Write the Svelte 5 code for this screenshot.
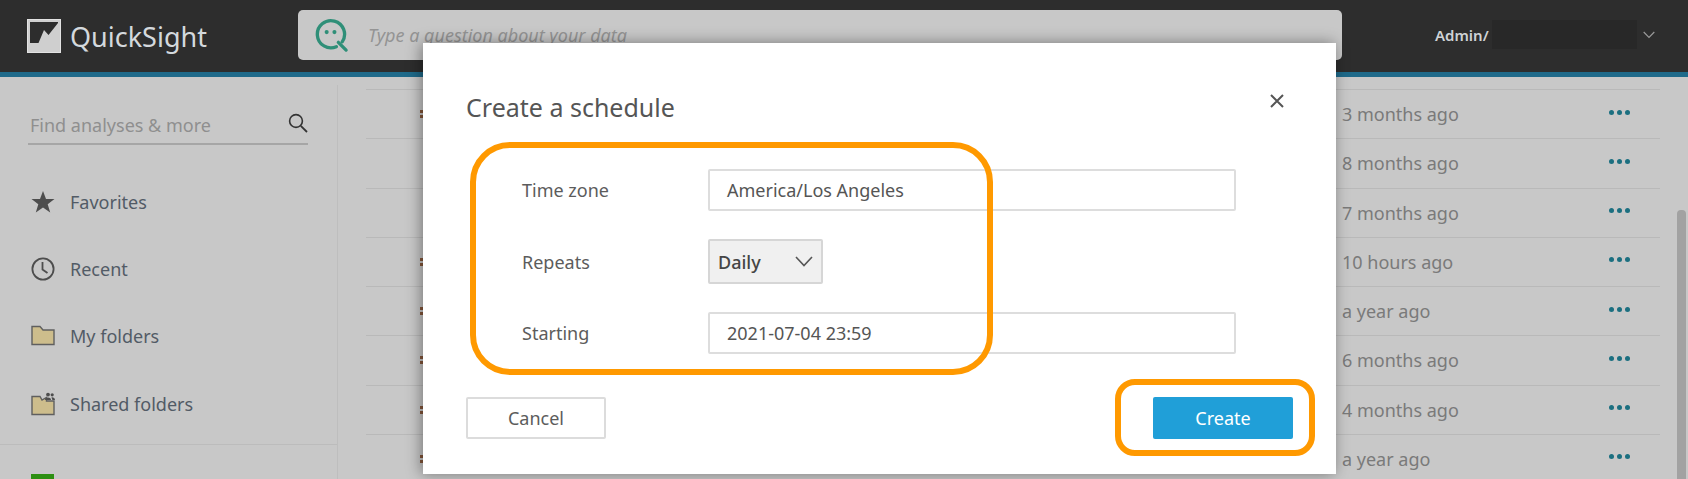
<script>
  const navItems = [
    { label: "Favorites", icon: "star" },
    { label: "Recent", icon: "clock" },
    { label: "My folders", icon: "folder" },
    { label: "Shared folders", icon: "shared" },
  ];

  const rows = [
    { age: "3 months ago", mark: true },
    { age: "8 months ago", mark: false },
    { age: "7 months ago", mark: false },
    { age: "10 hours ago", mark: true },
    { age: "a year ago", mark: true },
    { age: "6 months ago", mark: true },
    { age: "4 months ago", mark: true },
    { age: "a year ago", mark: true },
  ];
</script>

<div class="page">
  <header class="topbar">
    <div class="brand">
      <svg class="logo" viewBox="0 0 34 34" aria-hidden="true">
        <rect x="0.5" y="0.5" width="33" height="33" fill="#cfcfcf" stroke="#e2e2e2" />
        <path d="M3 3H31V4L21.5 16L17 11L11.5 24L3 24Z" fill="#2d2d2d" />
      </svg>
      <span class="brand-name">QuickSight</span>
    </div>
    <div class="ask">
      <svg class="ask-icon" viewBox="0 0 36 36" fill="none" aria-hidden="true">
        <path d="M22 29.5A14 14 0 1 1 28 24.5" stroke="#2f8f78" stroke-width="3.4" stroke-linecap="round" />
        <path d="M24 25L32 33" stroke="#2f8f78" stroke-width="3.4" stroke-linecap="round" />
        <circle cx="12" cy="14.5" r="2.1" fill="#2f8f78" />
        <circle cx="20" cy="14.5" r="2.1" fill="#2f8f78" />
      </svg>
      <span class="ask-text">Type a question about your data</span>
    </div>
    <div class="account">
      <span class="account-name">Admin/</span>
      <span class="redacted"></span>
      <svg class="account-caret" viewBox="0 0 12 8" fill="none" aria-hidden="true">
        <path d="M0.7 1L6 6.5L11.3 1" stroke="#9a9a9a" stroke-width="1.2" />
      </svg>
    </div>
  </header>

  <div class="content">
    <aside class="sidebar">
      <div class="find">
        <span class="find-text">Find analyses &amp; more</span>
        <svg class="find-icon" viewBox="0 0 20 20" fill="none" aria-hidden="true">
          <circle cx="8" cy="8" r="6.4" stroke="#333" stroke-width="1.6" />
          <path d="M12.8 12.8L19 19" stroke="#333" stroke-width="1.8" />
        </svg>
      </div>
      <nav class="nav">
        {#each navItems as item}
          <div class="nav-item">
            <span class="nav-icon">
              {#if item.icon === "star"}
                <svg viewBox="0 0 24 24" width="24" height="24" aria-hidden="true">
                  <path d="M12 1L15 9H23.5L16.7 14.2L19.2 22.6L12 17.6L4.8 22.6L7.3 14.2L0.5 9H9Z" fill="#4d4d4d" />
                </svg>
              {:else if item.icon === "clock"}
                <svg viewBox="0 0 24 24" width="24" height="24" fill="none" aria-hidden="true">
                  <circle cx="12" cy="12" r="10.6" stroke="#4d4d4d" stroke-width="1.8" />
                  <path d="M11.5 5V12.5L16.5 16" stroke="#4d4d4d" stroke-width="1.8" />
                </svg>
              {:else if item.icon === "folder"}
                <svg viewBox="0 0 24 24" width="24" height="24" aria-hidden="true">
                  <path d="M1 2.5H9L12 6H23V20.5H1Z" fill="#cdbd8c" stroke="#5f5f5f" stroke-width="1.4" />
                </svg>
              {:else}
                <svg viewBox="0 0 24 24" width="24" height="24" aria-hidden="true">
                  <path d="M1 4.5H9L11 8L15.5 5.5V9H23V22.5H1Z" fill="#cdbd8c" stroke="#5f5f5f" stroke-width="1.4" />
                  <circle cx="17" cy="2.6" r="1.9" fill="#4d4d4d" />
                  <circle cx="21.2" cy="2.8" r="1.6" fill="#4d4d4d" />
                  <path d="M14 8C14 4.8 20 4.8 20 8ZM20.5 5.4C22 5 24 6 24 8H21.4Z" fill="#4d4d4d" />
                </svg>
              {/if}
            </span>
            <span>{item.label}</span>
          </div>
        {/each}
      </nav>
      <div class="nav-rule"></div>
      <div class="green-tile"></div>
    </aside>

    <main class="list">
      {#each rows as row}
        <div class="row">
          <span></span>
          <span class="row-mark">{#if row.mark}<i></i><i></i>{/if}</span>
          <span class="row-age">{row.age}</span>
          <span class="row-more"><i></i><i></i><i></i></span>
        </div>
      {/each}
    </main>
  </div>

  <div class="scrollbar"></div>

  <section class="modal">
    <div class="modal-head">
      <h2>Create a schedule</h2>
      <svg class="close" viewBox="0 0 14 14" fill="none" aria-hidden="true">
        <path d="M1 1L13 13M13 1L1 13" stroke="#555" stroke-width="2" />
      </svg>
    </div>
    <div class="form">
      <div class="field">
        <span class="label">Time zone</span>
        <div class="input">America/Los Angeles</div>
      </div>
      <div class="field">
        <span class="label">Repeats</span>
        <div class="select">
          <span>Daily</span>
          <svg viewBox="0 0 18 11" width="18" height="11" fill="none" aria-hidden="true">
            <path d="M1 1L9 9.5L17 1" stroke="#555" stroke-width="1.6" />
          </svg>
        </div>
      </div>
      <div class="field">
        <span class="label">Starting</span>
        <div class="input">2021-07-04 23:59</div>
      </div>
    </div>
    <div class="actions">
      <button class="btn-cancel">Cancel</button>
      <button class="btn-create">Create</button>
    </div>
  </section>

  <div class="callout callout-form"></div>
  <div class="callout callout-create"></div>
</div>

<style>
  :global(body) {
    margin: 0;
    background: #c8c8c8;
  }

  .page {
    position: relative;
    width: 1688px;
    height: 479px;
    overflow: hidden;
    font-family: "Noto Sans", "Open Sans", sans-serif;
    color: #555;
  }

  /* Top bar */
  .topbar {
    display: flex;
    height: 72px;
    background: #2d2d2d;
    border-bottom: 5px solid #1f6a8a;
    align-items: flex-start;
  }

  .brand {
    display: flex;
    align-items: center;
    gap: 9px;
    width: 298px;
    height: 72px;
    padding-left: 27px;
    box-sizing: border-box;
  }

  .logo {
    width: 34px;
    height: 34px;
  }

  .brand-name {
    font-size: 27px;
    color: #d4d9dd;
  }

  .ask {
    display: flex;
    align-items: center;
    width: 1044px;
    height: 50px;
    margin-top: 10px;
    padding-left: 17px;
    box-sizing: border-box;
    background: #c8c8c8;
    border-radius: 5px;
    gap: 18px;
  }

  .ask-icon {
    width: 35px;
    height: 35px;
  }

  .ask-text {
    font-size: 18px;
    font-style: italic;
    color: #949494;
  }

  .account {
    display: flex;
    align-items: center;
    height: 29px;
    margin-top: 20px;
    margin-left: 93px;
  }

  .account-name {
    font-size: 15px;
    font-weight: 600;
    color: #cfd3d6;
    width: 57px;
  }

  .redacted {
    width: 145px;
    height: 29px;
    background: #282828;
  }

  .account-caret {
    width: 12px;
    height: 8px;
    margin-left: 6px;
  }

  /* Page behind the dialog */
  .content {
    display: flex;
    height: 402px;
  }

  .sidebar {
    position: relative;
    width: 338px;
    margin-top: 8px;
    border-right: 1px solid #bebebe;
    box-sizing: border-box;
    flex: none;
  }

  .find {
    display: flex;
    align-items: center;
    justify-content: space-between;
    width: 280px;
    height: 36px;
    margin: 24px 0 0 28px;
    padding: 0 0 3px 2px;
    box-sizing: border-box;
    border-bottom: 2px solid #a6a6a6;
  }

  .find-text {
    font-size: 18px;
    color: #8f8f8f;
  }

  .find-icon {
    width: 20px;
    height: 20px;
    margin-bottom: 3px;
  }

  .nav {
    display: flex;
    flex-direction: column;
    margin-top: 23px;
  }

  .nav-item {
    display: flex;
    align-items: center;
    gap: 15px;
    height: 67.4px;
    padding-left: 31px;
    font-size: 18px;
    color: #525b66;
  }

  .nav-icon {
    display: flex;
    width: 24px;
    height: 24px;
  }

  .nav-rule {
    margin-top: 6px;
    height: 1px;
    background: #bcbcbc;
    width: 337px;
  }

  .green-tile {
    width: 23px;
    height: 8px;
    margin: 29px 0 0 31px;
    background: #2d8f12;
  }

  .list {
    flex: none;
    width: 1294px;
    margin: 12px 0 0 28px;
  }

  .row {
    display: grid;
    grid-template-columns: 54px 922px 267px auto;
    align-items: center;
    height: 49.25px;
    box-sizing: border-box;
    border-top: 1px solid #b9b9b9;
    font-size: 18px;
  }

  .row-mark {
    display: flex;
    flex-direction: column;
    gap: 2px;
  }

  .row-mark i {
    width: 4px;
    height: 3px;
    background: #85573a;
  }

  .row-age {
    color: #7a7a7a;
  }

  .row-more {
    display: flex;
    gap: 3px;
    margin-bottom: 4px;
  }

  .row-more i {
    width: 5px;
    height: 5px;
    border-radius: 50%;
    background: #1b6f80;
  }

  .scrollbar {
    position: absolute;
    left: 1677px;
    top: 210px;
    width: 9px;
    height: 280px;
    border-radius: 4px;
    background: #a2a2a2;
  }

  /* Dialog */
  .modal {
    position: absolute;
    left: 423px;
    top: 43px;
    width: 913px;
    height: 431px;
    box-sizing: border-box;
    padding: 0 43px;
    background: #fff;
    box-shadow: -2px 0 14px rgba(0, 0, 0, 0.4);
  }

  .modal-head {
    display: flex;
    justify-content: space-between;
    height: 126px;
    box-sizing: border-box;
    padding-top: 43px;
  }

  h2 {
    margin: 0;
    font-size: 25px;
    line-height: 42px;
    font-weight: 400;
    color: #555;
  }

  .close {
    width: 14px;
    height: 14px;
    margin: 8px 9px 0 0;
  }

  .form {
    display: flex;
    flex-direction: column;
    padding-left: 56px;
    width: 770px;
  }

  .field {
    display: grid;
    grid-template-columns: 186px auto;
    align-items: center;
    justify-items: start;
    font-size: 18px;
  }

  .field:nth-child(2) {
    margin: 28px 0;
  }

  .label {
    color: #5c5c5c;
  }

  .input {
    width: 528px;
    height: 42px;
    box-sizing: border-box;
    padding-left: 17px;
    line-height: 38px;
    border: 2px solid #ddd;
    border-radius: 2px;
    color: #555;
  }

  .select {
    display: flex;
    align-items: center;
    justify-content: space-between;
    width: 115px;
    height: 45px;
    box-sizing: border-box;
    padding: 0 8px;
    background: #f0f0f0;
    border: 2px solid #d6d6d6;
    border-radius: 2px;
    font-weight: 500;
    color: #454545;
  }

  .actions {
    display: flex;
    justify-content: space-between;
    margin-top: 43px;
  }

  button {
    width: 140px;
    height: 42px;
    padding: 0;
    font: inherit;
    font-size: 18px;
    border-radius: 2px;
  }

  .btn-cancel {
    background: #fff;
    border: 2px solid #dcdcdc;
    color: #5c5c5c;
  }

  .btn-create {
    background: #209fd8;
    border: none;
    color: #fff;
  }

  /* Orange annotations drawn on top of the screenshot */
  .callout {
    position: absolute;
    box-sizing: border-box;
    border: 6px solid #ff9900;
  }

  .callout-form {
    left: 470px;
    top: 142px;
    width: 523px;
    height: 233px;
    border-radius: 40px;
  }

  .callout-create {
    left: 1115px;
    top: 379px;
    width: 200px;
    height: 77px;
    border-radius: 20px;
  }
</style>
